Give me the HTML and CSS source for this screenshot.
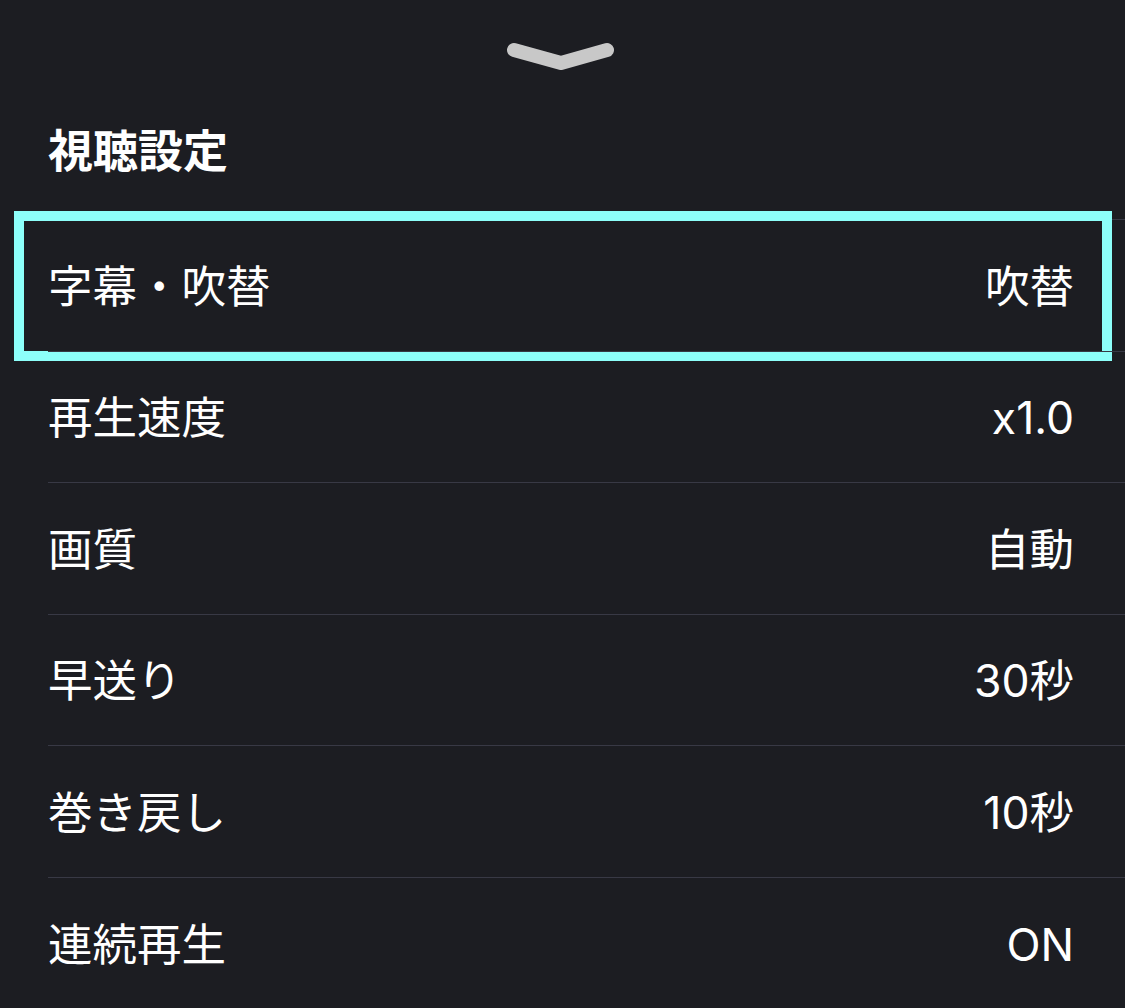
FILE: index.html
```html
<!DOCTYPE html>
<html lang="ja">
<head>
<meta charset="utf-8">
<title>視聴設定</title>
<link rel="stylesheet" href="styles.css">
</head>
<body>
<div class="sheet">
  <div class="handle">
    <svg class="chevron" width="120" height="40" viewBox="0 0 120 40">
      <polyline points="13,14 60,27 106,14" fill="none" stroke="#c8c8c8" stroke-width="14" stroke-linecap="round" stroke-linejoin="round"/>
    </svg>
  </div>
  <h1 class="title">視聴設定</h1>
  <ul class="list">
    <li class="row focused"><span class="label">字幕・吹替</span><span class="value">吹替</span><span class="focus-ring"></span></li>
    <li class="row"><span class="label">再生速度</span><span class="value">x1.0</span></li>
    <li class="row"><span class="label">画質</span><span class="value">自動</span></li>
    <li class="row"><span class="label">早送り</span><span class="value">30秒</span></li>
    <li class="row"><span class="label">巻き戻し</span><span class="value">10秒</span></li>
    <li class="row"><span class="label">連続再生</span><span class="value">ON</span></li>
  </ul>
</div>
</body>
</html>
```

FILE: styles.css
```css
html, body {
  margin: 0;
  padding: 0;
  background: #1c1d22;
  height: 100%;
  overflow: hidden;
}
body {
  font-family: "Inter", "Noto Sans CJK JP", "Noto Sans", sans-serif;
  color: #ffffff;
}
.sheet {
  display: flex;
  flex-direction: column;
}
.handle {
  height: 100px;
  display: flex;
  justify-content: center;
  align-items: flex-start;
}
.chevron {
  display: block;
  margin-top: 36px;
  margin-left: -4px;
}
.title {
  margin: 0;
  padding-left: 48px;
  height: 104px;
  line-height: 104px;
  font-size: 45px;
  font-weight: 700;
  margin-bottom: 15px;
}
.list {
  list-style: none;
  margin: 0;
  padding: 0 0 0 48px;
}
.row {
  position: relative;
  height: 130.6px;
  border-top: 1px solid #383945;
  display: flex;
  align-items: center;
  justify-content: space-between;
  padding-right: 51px;
  font-size: 44.5px;
  line-height: 1;
}
.label, .value {
  display: block;
  padding-top: 3px;
}
.focus-ring {
  position: absolute;
  left: -34px;
  right: 13px;
  top: -9px;
  bottom: -10px;
  border: 10px solid #8dfffa;
  pointer-events: none;
}
```
